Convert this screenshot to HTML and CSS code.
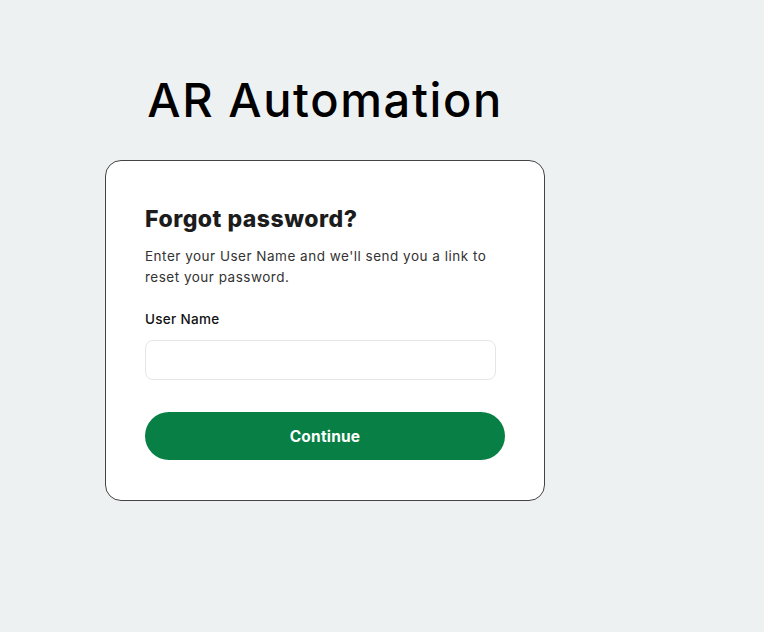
FILE: index.html
```html
<!DOCTYPE html>
<html lang="en">
<head>
  <meta charset="UTF-8">
  <meta name="viewport" content="width=device-width, initial-scale=1.0">
  <title>Forgot password</title>
  <link rel="stylesheet" href="styles.css">
</head>
<body>
  <div class="page">
    <h1 class="brand">AR Automation</h1>
    <div class="card">
      <h2>Forgot password?</h2>
      <p class="hint">Enter your User Name and we'll send you a link to reset your password.</p>
      <label class="label" for="userName">User Name</label>
      <input class="input" id="userName" type="text">
      <button class="button">Continue</button>
    </div>
  </div>
</body>
</html>
```

FILE: styles.css
```css
body {
  font-family: Inter, "Open Sans", sans-serif;
  margin: 0;
  padding: 0;
  background-color: #eef1f2;
  color: #222;
}

.page {
  width: 440px;
  margin-left: 105px;
  padding-top: 72px;
}

.brand {
  margin: 0 0 32px;
  text-align: center;
  font-size: 47px;
  line-height: 56px;
  font-weight: 500;
  letter-spacing: 1.6px;
  color: #000;
}

.card {
  background-color: #ffffff;
  border: 1px solid #444;
  border-radius: 16px;
  padding: 39px 39px 40px 39px;
}

.card h2 {
  margin: 4px 0 12px;
  font-size: 23px;
  line-height: 30px;
  font-weight: 800;
  letter-spacing: 0.5px;
  color: #1c1c1c;
}

.hint {
  margin: 0 0 22px;
  width: 360px;
  font-size: 13.5px;
  line-height: 21px;
  letter-spacing: 0.5px;
  color: #333;
}

.label {
  display: block;
  font-size: 13.5px;
  line-height: 18px;
  font-weight: 500;
  letter-spacing: 0.3px;
  color: #111;
  margin-bottom: 12px;
}

.input {
  display: block;
  box-sizing: border-box;
  width: 351px;
  height: 40px;
  border: 1px solid #e6e6e6;
  border-radius: 8px;
  margin: 0 0 32px;
  padding: 0 12px;
  font-size: 14px;
}

.button {
  display: block;
  width: 360px;
  height: 48px;
  border: none;
  border-radius: 24px;
  background-color: #087f45;
  color: #ffffff;
  font-family: inherit;
  font-size: 15.5px;
  font-weight: 700;
  letter-spacing: 0.2px;
  cursor: pointer;
}
```
